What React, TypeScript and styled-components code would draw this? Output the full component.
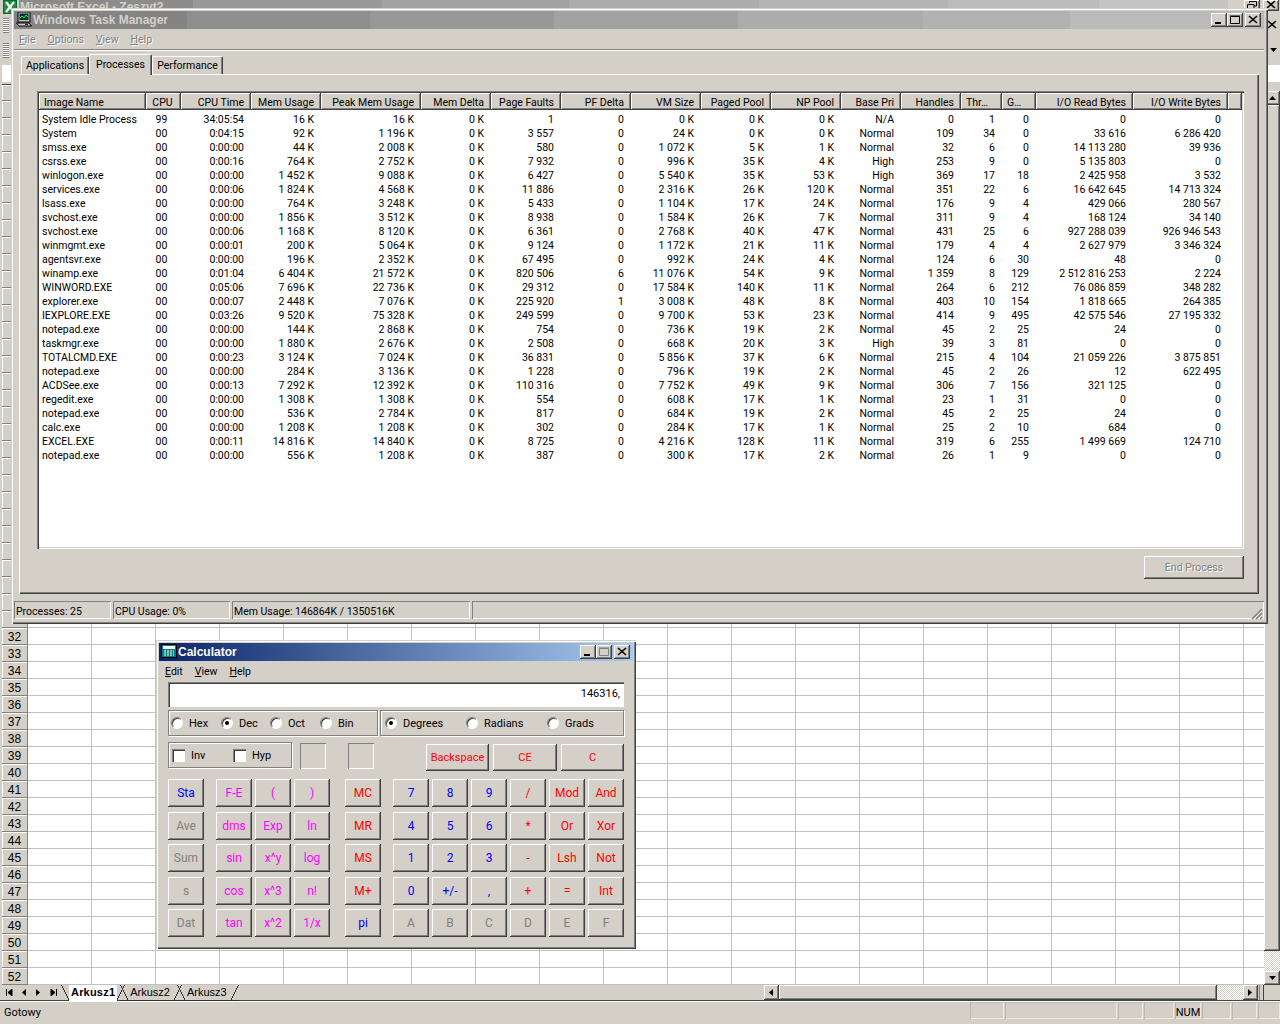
import React from 'react';
import styled, { createGlobalStyle, css } from 'styled-components';

const FACE = '#d4d0c8';

const Global = createGlobalStyle`
  html, body { margin: 0; padding: 0; background: ${FACE}; }
  body { font-family: Roboto, "Liberation Sans", Arial, sans-serif; font-size: 10.5px; color: #000; }
  * { box-sizing: border-box; }
`;

const raised = css`
  background: ${FACE};
  box-shadow: inset -1px -1px 0 #404040, inset 1px 1px 0 #fff, inset -2px -2px 0 #808080;
`;
const sunken = css`
  box-shadow: inset 1px 1px 0 #808080, inset -1px -1px 0 #fff;
`;

/* ---------- Screen and Excel behind ---------- */
const Screen = styled.div`
  position: relative; width: 1280px; height: 1024px; overflow: hidden; background: ${FACE};
  display: flex; flex-direction: column;
`;
const ExcelTitleRow = styled.div`
  height: 14px; flex: none; display: flex; align-items: flex-start; padding-left: 3px; overflow: hidden;
`;
const ExcelIconBox = styled.div`width: 14px; height: 14px; flex: none; margin-right: 2px;`;
const ExcelTitleBand = styled.div`
  flex: 1; height: 14px; line-height: 14px; padding-left: 1px; color: ${FACE}; font-weight: bold; font-size: 12px;
  font-family: "Liberation Sans", Arial, sans-serif;
  background: linear-gradient(to right, #8c8c8c 0 174px, #989898 174px 363px, #a2a2a2 363px 550px, #acacac 550px 740px, #b4b4b4 740px 929px, #bcbcbc 929px 1080px, #c4c4c4 1080px);
`;
const ExcelBtns = styled.div`width: 52px; flex: none; display: flex; justify-content: flex-end; gap: 3px; padding-right: 1px;`;
const ExcelBtn = styled.div`
  width: 16px; height: 11px; ${raised}; display: flex; align-items: flex-end; justify-content: center;
  svg { display: block; margin-bottom: 1px; }
`;
const ExcelToolRow = styled.div<{ $h: number }>`
  height: ${p => p.$h}px; flex: none; display: flex; align-items: center; justify-content: space-between; padding: 0 3px;
`;
const Grip = styled.div`
  width: 6px; height: 15px;
  background: repeating-linear-gradient(to bottom, #808080 0 1px, #fff 1px 2px);
`;
const Bracket = styled.div`
  width: 4px; height: 10px; border: 1px solid #007000; border-right: 0; margin-left: 2px;
`;
const GripGroup = styled.div`display: flex; align-items: center;`;
const FormulaRow = styled.div`
  height: 17px; flex: none; margin: 0 0 2px 2px; background: #fff;
`;
const Sheet = styled.div`flex: none; height: 901px; display: flex; padding-left: 2px;`;
const RowHead = styled.div`width: 26px; flex: none; display: flex; flex-direction: column; border-top: 1px solid #404040;`;
const ColCorner = styled.div`height: 16px; flex: none; border-bottom: 1px solid #808080; box-shadow: inset 1px 1px 0 #fff;`;
const RowCell = styled.div`
  height: 17px; flex: none; background: ${FACE}; font-size: 12px; line-height: 18px; text-align: center;
  font-family: "Liberation Sans", Arial, sans-serif;
  border-bottom: 1px solid #808080; border-right: 1px solid #808080; box-shadow: inset 1px 1px 0 #fff;
`;
const GridArea = styled.div`
  flex: 1; display: flex; flex-direction: column;
`;
const ColHead = styled.div`height: 17px; flex: none; background: ${FACE};`;
const Cells = styled.div`
  flex: 1; background-color: #fff;
  background-image:
    repeating-linear-gradient(to right, transparent 0 63px, #c0c0c0 63px 64px),
    repeating-linear-gradient(to bottom, transparent 0 16px, #c0c0c0 16px 17px);
`;
const VScroll = styled.div`width: 16px; flex: none; display: flex; flex-direction: column; padding-top: 7px; background: ${FACE};`;
const ScrollBtn = styled.div`
  width: 16px; height: 14px; flex: none; ${raised}; display: flex; align-items: center; justify-content: center;
`;
const VThumb = styled.div`flex: 1; ${raised};`;
const VDither = styled.div`
  height: 20px; flex: none; background: repeating-conic-gradient(#fff 0 25%, ${FACE} 0 50%) 0 0 / 2px 2px;
`;
const TabBar = styled.div`
  height: 16px; flex: none; display: flex; align-items: stretch; padding-left: 3px; border-bottom: 1px solid #404040;
  position: relative;
`;
const Nav = styled.div`display: flex; width: 58px; flex: none; align-items: center; justify-content: space-between; padding: 0 4px 0 3px;`;
const SheetTabs = styled.div`display: flex; width: 703px; flex: none; font-size: 11px; font-family: "Liberation Sans", Arial, sans-serif;`;
const SheetTab = styled.div<{ $active?: boolean }>`
  height: 16px; line-height: 15px; padding: 0 ${p => (p.$active ? 10 : 12)}px 0 10px; margin-right: -5px; white-space: nowrap;
  font-weight: ${p => (p.$active ? 'bold' : 'normal')};
  letter-spacing: ${p => (p.$active ? '0.2px' : '0')};
  background:
    linear-gradient(to bottom left, transparent calc(50% - 1px), #303030 calc(50% - 1px), #303030 50%, transparent 50%) left / 8px 100% no-repeat,
    linear-gradient(to bottom right, transparent calc(50% - 1px), #303030 calc(50% - 1px), #303030 50%, transparent 50%) right / 8px 100% no-repeat,
    linear-gradient(${p => (p.$active ? '#fff' : FACE)}, ${p => (p.$active ? '#fff' : FACE)}) 8px 0 / calc(100% - 16px) 100% no-repeat;
  ${p => !p.$active && css`box-shadow: inset 0 -1px 0 #303030;`}
`;
const HScroll = styled.div`flex: 1; display: flex; align-items: stretch;`;
const HBtn = styled.div`
  width: 15px; flex: none; ${raised}; display: flex; align-items: center; justify-content: center;
`;
const HThumb = styled.div`flex: 1; ${raised};`;
const HDither = styled.div`
  width: 26px; flex: none; background: repeating-conic-gradient(#fff 0 25%, ${FACE} 0 50%) 0 0 / 2px 2px;
`;
const HEnd = styled.div`width: 6px; flex: none; border-right: 1px solid #404040; box-shadow: inset 1px 0 0 ${FACE}, inset 2px 0 0 #808080;`;
const HCorner = styled.div`width: 16px; flex: none;`;
const ExcelStatus = styled.div`
  height: 18px; flex: none; border-top: 1px solid #fff; display: flex; align-items: stretch; padding-left: 4px;
`;
const Ready = styled.div`flex: 1; line-height: 22px; font-size: 11px;`;
const StatusCell = styled.div<{ $w: number }>`
  width: ${p => p.$w}px; flex: none; margin-left: 1px; text-align: center; line-height: 22px; font-size: 11px;
  box-shadow: inset 1px 1px 0 #bdb9b1, inset -1px -1px 0 #ecebe6;
`;

/* ---------- Windows ---------- */
const WindowFrame = styled.div`
  position: absolute; background: ${FACE};
  box-shadow: inset 1px 1px 0 ${FACE}, inset 2px 2px 0 #fff, inset -1px -1px 0 #404040, inset -2px -2px 0 #808080;
  display: flex; flex-direction: column;
`;
const TaskWindow = styled(WindowFrame)`
  left: 11px; top: 8px; width: 1257px; height: 616px; padding: 3px 4px 4px 3px;
`;
const TitleBar = styled.div<{ $active?: boolean }>`
  height: 18px; flex: none; display: flex; align-items: center; padding: 0 3px 0 2px;
  color: ${p => (p.$active ? '#fff' : FACE)}; font-weight: bold; font-size: 12px;
  font-family: "Liberation Sans", Arial, sans-serif;
`;
const TaskTitleBar = styled(TitleBar)`
  background: linear-gradient(to right, #848484 0 173px, #8e8e8e 173px 356px, #989898 356px 540px, #a2a2a2 540px 724px, #acacac 724px 909px, #b2b2b2 909px 1056px, #bababa 1056px);
`;
const CalcTitleBar = styled(TitleBar)`
  background: linear-gradient(to right, #0a246a, #a6caf0);
`;
const TitleIcon = styled.div`width: 16px; height: 16px; flex: none; margin-right: 1px;`;
const TitleText = styled.div`flex: 1; white-space: nowrap;`;
const WinBtn = styled.div<{ $gap?: number }>`
  width: 16px; height: 14px; flex: none; ${raised}; margin-left: ${p => p.$gap ?? 0}px;
  display: flex; align-items: center; justify-content: center;
  svg { display: block; }
`;
const MenuBar = styled.div`
  height: 18px; margin: 1px 0 1px; flex: none; display: flex; gap: 12px; align-items: center; padding-left: 5px;
  color: #808080; text-shadow: 1px 1px 0 #fff;
`;
const MenuSep = styled.div`height: 2px; flex: none; border-top: 1px solid #808080; border-bottom: 1px solid #fff;`;
const Tabs = styled.div`height: 23px; flex: none; display: flex; align-items: flex-end; padding: 0 0 0 7px;`;
const Tab = styled.div<{ $active?: boolean; $w: number }>`
  width: ${p => p.$w}px; flex: none; text-align: center; position: relative; white-space: nowrap;
  height: ${p => (p.$active ? 21 : 18)}px; line-height: ${p => (p.$active ? 20 : 18)}px;
  background: ${FACE};
  border-top: 1px solid #fff; border-left: 1px solid #fff; border-right: 1px solid #404040;
  border-radius: 2px 2px 0 0;
  box-shadow: inset -1px 0 0 #808080;
  z-index: ${p => (p.$active ? 1 : 0)};
  margin-bottom: ${p => (p.$active ? -1 : 0)}px;
`;
const TabSheet = styled.div`
  flex: none; height: 520px; margin: 0 5px 0 5px; padding: 17px 15px 15px 18px; display: flex; flex-direction: column;
  box-shadow: inset 1px 1px 0 #fff, inset -1px -1px 0 #404040, inset -2px -2px 0 #808080;
`;
const ListView = styled.div`
  flex: 1; background: #fff; display: flex; flex-direction: column; min-height: 0;
  box-shadow: inset 1px 1px 0 #808080, inset 2px 2px 0 #404040, inset -1px -1px 0 #fff, inset -2px -2px 0 ${FACE};
  padding: 2px;
`;
const HeaderRow = styled.div`
  height: 17px; flex: none; display: flex; background: ${FACE};
`;
const HeaderCell = styled.div<{ $w: number; $align: string }>`
  width: ${p => p.$w}px; flex: none; height: 17px; line-height: 19px; padding: 0 7px 0 5px; white-space: nowrap; overflow: hidden;
  text-align: ${p => p.$align}; ${raised};
`;
const HeaderFill = styled.div`flex: 1; ${raised};`;
const Rows = styled.div`padding-top: 3px;`;
const Row = styled.div`height: 14px; display: flex; line-height: 14px;`;
const Cell = styled.div<{ $w: number; $align: string }>`
  width: ${p => p.$w}px; flex: none; padding: 0 7px 0 3px; white-space: nowrap; overflow: hidden; text-align: ${p => p.$align};
`;
const EndRow = styled.div`flex: none; display: flex; justify-content: flex-end; padding-top: 7px;`;
const EndBtn = styled.div`
  width: 100px; height: 23px; ${raised}; text-align: center; line-height: 23px; color: #808080; text-shadow: 1px 1px 0 #fff;
`;
const TaskStatus = styled.div`
  flex: 1; margin-top: 7px; display: flex; gap: 2px; padding-right: 0;
`;
const TaskStatusCell = styled.div<{ $w?: number }>`
  ${p => (p.$w ? css`width: ${p.$w}px; flex: none;` : css`flex: 1;`)}
  height: 18px; line-height: 21px; padding-left: 2px; white-space: nowrap; position: relative; ${sunken};
`;
const ResizeGrip = styled.div`
  position: absolute; right: 1px; bottom: 1px; width: 12px; height: 12px;
`;

/* ---------- Calculator ---------- */
const CalcWindow = styled(WindowFrame)`
  left: 156px; top: 640px; width: 480px; height: 309px; padding: 3px 3px 0 3px; font-size: 11px;
`;
const CalcMenu = styled.div`
  height: 19px; flex: none; display: flex; align-items: center; gap: 12px; padding-left: 6px; margin: 1px 0 1px; font-size: 10.5px;
`;
const CalcBody = styled.div`padding: 0 9px; display: flex; flex-direction: column; flex: 1;`;
const Display = styled.div`
  height: 25px; flex: none; background: #fff; text-align: right; padding-right: 4px; line-height: 24px;
  box-shadow: inset 1px 1px 0 #808080, inset 2px 2px 0 #404040, inset -1px -1px 0 #fff;
`;
const ModeRow = styled.div`display: flex; gap: 2px; margin-top: 3px;`;
const GroupBox = styled.div<{ $w: number; $pad?: number }>`
  width: ${p => p.$w}px; flex: none; height: 26px; display: flex; align-items: center; padding-left: ${p => p.$pad ?? 5}px;
  box-shadow: inset 1px 1px 0 #808080, inset -1px -1px 0 #808080, inset 2px 2px 0 #fff, 1px 1px 0 #fff;
`;
const RadioItem = styled.div<{ $w: number }>`
  width: ${p => p.$w}px; flex: none; display: flex; align-items: center; gap: 6px;
`;
const RadioDot = styled.div<{ $on?: boolean }>`
  width: 12px; height: 12px; flex: none; border-radius: 50%; background: #fff; position: relative;
  border: 1px solid; border-color: #808080 #fff #fff #808080; box-shadow: inset 1px 1px 0 #404040;
  ${p => p.$on && css`
    &::after {
      content: ''; position: absolute; left: 3px; top: 3px; width: 4px; height: 4px; border-radius: 50%; background: #000;
    }
  `}
`;
const OptionRow = styled.div`display: flex; margin-top: 6px; height: 27px; align-items: flex-start;`;
const CheckBox = styled.div`
  width: 13px; height: 13px; flex: none; background: #fff;
  box-shadow: inset 1px 1px 0 #808080, inset 2px 2px 0 #404040, inset -1px -1px 0 #fff;
`;
const SmallBox = styled.div<{ $gap: number }>`
  width: 26px; height: 26px; flex: none; margin-left: ${p => p.$gap}px; margin-top: 1px;
  box-shadow: inset 1px 1px 0 #808080, inset -1px -1px 0 #fff;
`;
const EditBtns = styled.div`margin-left: auto; display: flex; gap: 4px; padding-top: 2px;`;
const EditBtn = styled.div<{ $w: number }>`
  width: ${p => p.$w}px; height: 27px; ${raised}; color: #f00; text-align: center; line-height: 28px; flex: none;
`;
const Keys = styled.div`display: flex; margin-top: 10px;`;
const KeyCol = styled.div<{ $n: number }>`
  display: grid; grid-auto-rows: 28px; row-gap: 4.5px; grid-template-columns: repeat(${p => p.$n}, 36px); column-gap: 3px;
`;
const KeySpacer = styled.div<{ $w: number }>`width: ${p => p.$w}px; flex: none;`;
const Key = styled.div<{ $c: string }>`
  ${raised}; color: ${p => p.$c}; text-align: center; line-height: 29px; white-space: nowrap; font-size: 12px;
`;

/* ---------- Drawn icons ---------- */
const ExcelLogo = () => (
  <svg width="14" height="14" viewBox="0 0 14 14">
    <rect width="14" height="14" fill="#0a6a2a" />
    <rect x="1" y="1" width="12" height="12" fill="#1e8f3c" />
    <path d="M3 2 L11 12 M11 2 L3 12" stroke="#fff" strokeWidth="2.2" />
  </svg>
);
const TaskIcon = () => (
  <svg width="16" height="16" viewBox="0 0 16 16">
    <rect x="2" y="0" width="12" height="10" fill="#c0c0c0" stroke="#000" strokeWidth="1" />
    <rect x="3.5" y="1.5" width="9" height="6.5" fill="#003030" />
    <path d="M4 6 L6 4 L8 6 L10 3 L12 5" stroke="#00ff40" strokeWidth="1" fill="none" />
    <path d="M0.5 11 H13 L15.5 14 H3 Z" fill="#d4d0c8" stroke="#000" />
    <rect x="9" y="11.8" width="3" height="1" fill="#000" />
  </svg>
);
const CalcIcon = () => (
  <svg width="16" height="14" viewBox="0 0 16 14">
    <rect x="0.5" y="0.5" width="15" height="13" fill="#008080" stroke="#000" />
    <rect x="2" y="2" width="12" height="3" fill="#fff" />
    <path d="M3 7 H13 M3 9 H13 M3 11 H13" stroke="#fff" strokeWidth="1" strokeDasharray="2 1" />
  </svg>
);
const MinGlyph = ({ c = '#000' }: { c?: string }) => (
  <svg width="10" height="10" viewBox="0 0 10 10"><rect x="1" y="7" width="6" height="2" fill={c} /></svg>
);
const MaxGlyph = ({ c = '#000' }: { c?: string }) => (
  <svg width="10" height="10" viewBox="0 0 10 10"><path d="M0.5 1.5 H9.5 V8.5 H0.5 Z M0 1 H10" fill="none" stroke={c} strokeWidth="1" /></svg>
);
const CloseGlyph = ({ c = '#000' }: { c?: string }) => (
  <svg width="10" height="10" viewBox="0 0 10 10"><path d="M1 1 L9 8 M9 1 L1 8" stroke={c} strokeWidth="1.6" /></svg>
);
const RestoreGlyph = () => (
  <svg width="10" height="9" viewBox="0 0 10 9"><path d="M2.5 2 V0.5 H9.5 V5 H7 M0.5 3.5 H7 V8.5 H0.5 Z" fill="none" stroke="#000" /></svg>
);
const Arrow = ({ dir }: { dir: 'up' | 'down' | 'left' | 'right' }) => {
  const d = { up: 'M0 5 L3.5 1 L7 5 Z', down: 'M0 1 H7 L3.5 5 Z', left: 'M5 0 V7 L1 3.5 Z', right: 'M1 0 V7 L5 3.5 Z' }[dir];
  return <svg width="7" height="7" viewBox="0 0 7 7"><path d={d} fill="#000" /></svg>;
};
const NavEnd = ({ dir }: { dir: 'left' | 'right' }) => (
  <svg width="7" height="7" viewBox="0 0 7 7">
    <path d={dir === 'left' ? 'M0.5 0 V7 M6 0 V7 L2 3.5 Z' : 'M6.5 0 V7 M1 0 V7 L5 3.5 Z'} stroke="#000" strokeWidth="1" fill="#000" />
  </svg>
);

/* ---------- Data ---------- */
const columns: { label: string; w: number; head: string; align: string }[] = [
  { label: 'Image Name', w: 107, head: 'left', align: 'left' },
  { label: 'CPU', w: 35, head: 'center', align: 'center' },
  { label: 'CPU Time', w: 70, head: 'right', align: 'right' },
  { label: 'Mem Usage', w: 70, head: 'right', align: 'right' },
  { label: 'Peak Mem Usage', w: 100, head: 'right', align: 'right' },
  { label: 'Mem Delta', w: 70, head: 'right', align: 'right' },
  { label: 'Page Faults', w: 70, head: 'right', align: 'right' },
  { label: 'PF Delta', w: 70, head: 'right', align: 'right' },
  { label: 'VM Size', w: 70, head: 'right', align: 'right' },
  { label: 'Paged Pool', w: 70, head: 'right', align: 'right' },
  { label: 'NP Pool', w: 70, head: 'right', align: 'right' },
  { label: 'Base Pri', w: 60, head: 'right', align: 'right' },
  { label: 'Handles', w: 60, head: 'right', align: 'right' },
  { label: 'Thr…', w: 41, head: 'left', align: 'right' },
  { label: 'G…', w: 34, head: 'left', align: 'right' },
  { label: 'I/O Read Bytes', w: 97, head: 'right', align: 'right' },
  { label: 'I/O Write Bytes', w: 95, head: 'right', align: 'right' },
];

const raw = `System Idle Process|99|34:05:54|16 K|16 K|0 K|1|0|0 K|0 K|0 K|N/A|0|1|0|0|0
System|00|0:04:15|92 K|1 196 K|0 K|3 557|0|24 K|0 K|0 K|Normal|109|34|0|33 616|6 286 420
smss.exe|00|0:00:00|44 K|2 008 K|0 K|580|0|1 072 K|5 K|1 K|Normal|32|6|0|14 113 280|39 936
csrss.exe|00|0:00:16|764 K|2 752 K|0 K|7 932|0|996 K|35 K|4 K|High|253|9|0|5 135 803|0
winlogon.exe|00|0:00:00|1 452 K|9 088 K|0 K|6 427|0|5 540 K|35 K|53 K|High|369|17|18|2 425 958|3 532
services.exe|00|0:00:06|1 824 K|4 568 K|0 K|11 886|0|2 316 K|26 K|120 K|Normal|351|22|6|16 642 645|14 713 324
lsass.exe|00|0:00:00|764 K|3 248 K|0 K|5 433|0|1 104 K|17 K|24 K|Normal|176|9|4|429 066|280 567
svchost.exe|00|0:00:00|1 856 K|3 512 K|0 K|8 938|0|1 584 K|26 K|7 K|Normal|311|9|4|168 124|34 140
svchost.exe|00|0:00:06|1 168 K|8 120 K|0 K|6 361|0|2 768 K|40 K|47 K|Normal|431|25|6|927 288 039|926 946 543
winmgmt.exe|00|0:00:01|200 K|5 064 K|0 K|9 124|0|1 172 K|21 K|11 K|Normal|179|4|4|2 627 979|3 346 324
agentsvr.exe|00|0:00:00|196 K|2 352 K|0 K|67 495|0|992 K|24 K|4 K|Normal|124|6|30|48|0
winamp.exe|00|0:01:04|6 404 K|21 572 K|0 K|820 506|6|11 076 K|54 K|9 K|Normal|1 359|8|129|2 512 816 253|2 224
WINWORD.EXE|00|0:05:06|7 696 K|22 736 K|0 K|29 312|0|17 584 K|140 K|11 K|Normal|264|6|212|76 086 859|348 282
explorer.exe|00|0:00:07|2 448 K|7 076 K|0 K|225 920|1|3 008 K|48 K|8 K|Normal|403|10|154|1 818 665|264 385
IEXPLORE.EXE|00|0:03:26|9 520 K|75 328 K|0 K|249 599|0|9 700 K|53 K|23 K|Normal|414|9|495|42 575 546|27 195 332
notepad.exe|00|0:00:00|144 K|2 868 K|0 K|754|0|736 K|19 K|2 K|Normal|45|2|25|24|0
taskmgr.exe|00|0:00:00|1 880 K|2 676 K|0 K|2 508|0|668 K|20 K|3 K|High|39|3|81|0|0
TOTALCMD.EXE|00|0:00:23|3 124 K|7 024 K|0 K|36 831|0|5 856 K|37 K|6 K|Normal|215|4|104|21 059 226|3 875 851
notepad.exe|00|0:00:00|284 K|3 136 K|0 K|1 228|0|796 K|19 K|2 K|Normal|45|2|26|12|622 495
ACDSee.exe|00|0:00:13|7 292 K|12 392 K|0 K|110 316|0|7 752 K|49 K|9 K|Normal|306|7|156|321 125|0
regedit.exe|00|0:00:00|1 308 K|1 308 K|0 K|554|0|608 K|17 K|1 K|Normal|23|1|31|0|0
notepad.exe|00|0:00:00|536 K|2 784 K|0 K|817|0|684 K|19 K|2 K|Normal|45|2|25|24|0
calc.exe|00|0:00:00|1 208 K|1 208 K|0 K|302|0|284 K|17 K|1 K|Normal|25|2|10|684|0
EXCEL.EXE|00|0:00:11|14 816 K|14 840 K|0 K|8 725|0|4 216 K|128 K|11 K|Normal|319|6|255|1 499 669|124 710
notepad.exe|00|0:00:00|556 K|1 208 K|0 K|387|0|300 K|17 K|2 K|Normal|26|1|9|0|0`;
const rows = raw.split('\n').map(l => l.split('|'));

const B = '#0000ff', M = '#ff00ff', R = '#ff0000', G = '#808080';
type K = [string, string];
const statKeys: K[] = [['Sta', B], ['Ave', G], ['Sum', G], ['s', G], ['Dat', G]];
const sciKeys: K[] = [
  ['F-E', M], ['(', M], [')', M],
  ['dms', M], ['Exp', M], ['ln', M],
  ['sin', M], ['x^y', M], ['log', M],
  ['cos', M], ['x^3', M], ['n!', M],
  ['tan', M], ['x^2', M], ['1/x', M],
];
const memKeys: K[] = [['MC', R], ['MR', R], ['MS', R], ['M+', R], ['pi', B]];
const numKeys: K[] = [
  ['7', B], ['8', B], ['9', B], ['/', R], ['Mod', R], ['And', R],
  ['4', B], ['5', B], ['6', B], ['*', R], ['Or', R], ['Xor', R],
  ['1', B], ['2', B], ['3', B], ['-', R], ['Lsh', R], ['Not', R],
  ['0', B], ['+/-', B], [',', B], ['+', R], ['=', R], ['Int', R],
  ['A', G], ['B', G], ['C', G], ['D', G], ['E', G], ['F', G],
];
const renderKeys = (list: K[]) => list.map(([t, c]) => <Key key={t} $c={c}>{t}</Key>);

const rowNums = Array.from({ length: 52 }, (_, i) => i + 1);

export default function App() {
  return (
    <Screen>
      <Global />
      <ExcelTitleRow>
        <ExcelIconBox><ExcelLogo /></ExcelIconBox>
        <ExcelTitleBand>Microsoft Excel - Zeszyt2</ExcelTitleBand>
        <ExcelBtns>
          <ExcelBtn><RestoreGlyph /></ExcelBtn>
          <ExcelBtn><CloseGlyph /></ExcelBtn>
        </ExcelBtns>
      </ExcelTitleRow>
      <ExcelToolRow $h={22}>
        <GripGroup><Grip /><Bracket /></GripGroup>
        <CloseGlyph />
      </ExcelToolRow>
      <ExcelToolRow $h={29}>
        <Grip />
        <Arrow dir="down" />
      </ExcelToolRow>
      <FormulaRow />
      <Sheet>
        <RowHead>
          <ColCorner />
          {rowNums.map(n => <RowCell key={n}>{n >= 32 ? n : ''}</RowCell>)}
        </RowHead>
        <GridArea>
          <ColHead />
          <Cells />
        </GridArea>
        <VScroll>
          <ScrollBtn><Arrow dir="up" /></ScrollBtn>
          <VThumb />
          <VDither />
          <ScrollBtn><Arrow dir="down" /></ScrollBtn>
        </VScroll>
      </Sheet>
      <TabBar>
        <Nav>
          <NavEnd dir="left" /><Arrow dir="left" /><Arrow dir="right" /><NavEnd dir="right" />
        </Nav>
        <SheetTabs>
          <SheetTab $active>Arkusz1</SheetTab>
          <SheetTab>Arkusz2</SheetTab>
          <SheetTab>Arkusz3</SheetTab>
        </SheetTabs>
        <HScroll>
          <HBtn><Arrow dir="left" /></HBtn>
          <HThumb />
          <HDither />
          <HBtn><Arrow dir="right" /></HBtn>
          <HEnd />
        </HScroll>
        <HCorner />
      </TabBar>
      <ExcelStatus>
        <Ready>Gotowy</Ready>
        <StatusCell $w={34} />
        <StatusCell $w={112} />
        <StatusCell $w={25} />
        <StatusCell $w={30} />
        <StatusCell $w={26}>NUM</StatusCell>
        <StatusCell $w={29} />
        <StatusCell $w={25} />
        <StatusCell $w={22} />
      </ExcelStatus>

      <TaskWindow>
        <TaskTitleBar>
          <TitleIcon><TaskIcon /></TitleIcon>
          <TitleText>Windows Task Manager</TitleText>
          <WinBtn><MinGlyph /></WinBtn>
          <WinBtn><MaxGlyph /></WinBtn>
          <WinBtn $gap={2}><CloseGlyph /></WinBtn>
        </TaskTitleBar>
        <MenuBar>
          <span><u>F</u>ile</span>
          <span><u>O</u>ptions</span>
          <span><u>V</u>iew</span>
          <span><u>H</u>elp</span>
        </MenuBar>
        <MenuSep />
        <Tabs>
          <Tab $w={68}>Applications</Tab>
          <Tab $w={63} $active>Processes</Tab>
          <Tab $w={71}>Performance</Tab>
        </Tabs>
        <TabSheet>
          <ListView>
            <HeaderRow>
              {columns.map(c => <HeaderCell key={c.label} $w={c.w} $align={c.head}>{c.label}</HeaderCell>)}
              <HeaderFill />
            </HeaderRow>
            <Rows>
              {rows.map((r, i) => (
                <Row key={i}>
                  {r.map((v, j) => <Cell key={j} $w={columns[j].w} $align={columns[j].align}>{v}</Cell>)}
                </Row>
              ))}
            </Rows>
          </ListView>
          <EndRow><EndBtn>End Process</EndBtn></EndRow>
        </TabSheet>
        <TaskStatus>
          <TaskStatusCell $w={97}>Processes: 25</TaskStatusCell>
          <TaskStatusCell $w={117}>CPU Usage: 0%</TaskStatusCell>
          <TaskStatusCell $w={238}>Mem Usage: 146864K / 1350516K</TaskStatusCell>
          <TaskStatusCell>
            <ResizeGrip>
              <svg width="12" height="12" viewBox="0 0 12 12">
                <path d="M11 1 L1 11 M11 5 L5 11 M11 9 L9 11" stroke="#808080" strokeWidth="1.5" />
                <path d="M11 3 L3 11 M11 7 L7 11" stroke="#fff" strokeWidth="1" />
              </svg>
            </ResizeGrip>
          </TaskStatusCell>
        </TaskStatus>
      </TaskWindow>

      <CalcWindow>
        <CalcTitleBar $active>
          <TitleIcon><CalcIcon /></TitleIcon>
          <TitleText>Calculator</TitleText>
          <WinBtn><MinGlyph /></WinBtn>
          <WinBtn><MaxGlyph c="#808080" /></WinBtn>
          <WinBtn $gap={2}><CloseGlyph /></WinBtn>
        </CalcTitleBar>
        <CalcMenu>
          <span><u>E</u>dit</span>
          <span><u>V</u>iew</span>
          <span><u>H</u>elp</span>
        </CalcMenu>
        <CalcBody>
          <Display>146316,</Display>
          <ModeRow>
            <GroupBox $w={210} $pad={3}>
              <RadioItem $w={50}><RadioDot />Hex</RadioItem>
              <RadioItem $w={49}><RadioDot $on />Dec</RadioItem>
              <RadioItem $w={50}><RadioDot />Oct</RadioItem>
              <RadioItem $w={50}><RadioDot />Bin</RadioItem>
            </GroupBox>
            <GroupBox $w={244}>
              <RadioItem $w={81}><RadioDot $on />Degrees</RadioItem>
              <RadioItem $w={81}><RadioDot />Radians</RadioItem>
              <RadioItem $w={70}><RadioDot />Grads</RadioItem>
            </GroupBox>
          </ModeRow>
          <OptionRow>
            <GroupBox $w={124} $pad={4}>
              <RadioItem $w={61}><CheckBox />Inv</RadioItem>
              <RadioItem $w={50}><CheckBox />Hyp</RadioItem>
            </GroupBox>
            <SmallBox $gap={8} />
            <SmallBox $gap={22} />
            <EditBtns>
              <EditBtn $w={63}>Backspace</EditBtn>
              <EditBtn $w={64}>CE</EditBtn>
              <EditBtn $w={63}>C</EditBtn>
            </EditBtns>
          </OptionRow>
          <Keys>
            <KeyCol $n={1}>{renderKeys(statKeys)}</KeyCol>
            <KeySpacer $w={12} />
            <KeyCol $n={3}>{renderKeys(sciKeys)}</KeyCol>
            <KeySpacer $w={15} />
            <KeyCol $n={1}>{renderKeys(memKeys)}</KeyCol>
            <KeySpacer $w={12} />
            <KeyCol $n={6}>{renderKeys(numKeys)}</KeyCol>
          </Keys>
        </CalcBody>
      </CalcWindow>
    </Screen>
  );
}
